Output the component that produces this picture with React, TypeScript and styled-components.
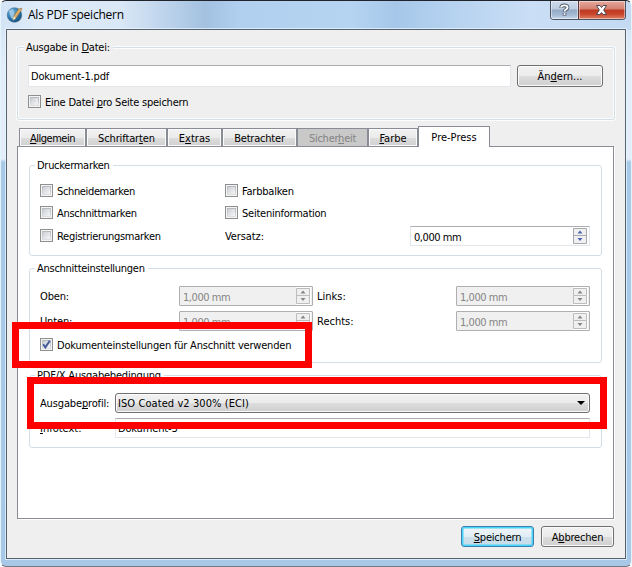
import React from "react";
import styled, { createGlobalStyle, css } from "styled-components";

const ui = `"DejaVu Sans Condensed", "DejaVu Sans", sans-serif`;

const Global = createGlobalStyle`
  * { box-sizing: border-box; }
  body { margin: 0; background: #fff; overflow: hidden; }
  #root { width: 632px; height: 567px; }
`;

const Window = styled.div`
  position: relative;
  width: 632px;
  height: 567px;
  display: flex;
  flex-direction: column;
  padding: 0 5px 7px 5px;
  border: 1px solid #e4f4fc;
  border-top-color: #22242c;
  border-bottom-color: #75797f;
  border-radius: 6px;
  color: #000;
  font-family: ${ui};
  font-size: 11px;
  line-height: 14px;
  white-space: nowrap;
  background:
    linear-gradient(90deg, #d3e4f6 0, #dfebf8 40px, #d9e7f6 120px, #bdd3ec 165px, #a3c1e0 205px, #b1d0ef 240px, #b5d4f2 350px, #a6c7e9 395px, #b0cfee 430px, #cadef5 530px, #c3daf2 100%) 0 0 / 100% 29px no-repeat,
    linear-gradient(#cfe1f5 0, #e1edf9 60px, #e3eefa 158px, #a9c9e9 161px, #a8c8e8 100%);
`;

const TitleBar = styled.header`
  display: flex;
  height: 28px;
  align-items: flex-start;
`;

const Title = styled.h1`
  flex: 1;
  margin: 5px 0 0 5px;
  font: 400 12px/18px "Open Sans", "Noto Sans", sans-serif;
  letter-spacing: -0.22px;
`;

const Logo = styled.svg`
  margin: 5px 0 0 0;
`;

const Caption = styled.div`
  display: flex;
  width: 76px;
  height: 19px;
  border: 1px solid #4c5463;
  border-top: 0;
  border-radius: 0 0 4px 4px;
  overflow: hidden;
`;

const CaptionButton = styled.button<{ $close?: boolean }>`
  display: grid;
  place-items: center;
  width: 27px;
  padding: 0;
  border: 0;
  box-shadow: inset 0 0 0 1px rgba(255, 255, 255, .45);
  background: linear-gradient(#cfdcec 0, #bccbdf 8px, #94a9c4 9px, #a5bad3 14px, #c8dbef 18px);
  ${(p) =>
    p.$close &&
    css`
      width: 48px;
      border-left: 1px solid #5d3235;
      background: linear-gradient(#e6aa9d 0, #d4806f 8px, #bb3a22 9px, #c8452b 13px, #df8064 18px);
    `}
`;

const Client = styled.main`
  display: flex;
  flex-direction: column;
  height: 530px;
  padding: 17px 10px 0 10px;
  border: 1px solid #56636f;
  background: #efefef;
  box-shadow: 0 0 0 1px rgba(235, 246, 255, .7);
`;

const Group = styled.section<{ $h: number; $mb?: number }>`
  display: flex;
  flex-direction: column;
  height: ${(p) => p.$h}px;
  margin-bottom: ${(p) => p.$mb ?? 0}px;
  padding: 0 10px;
  border: 1px solid #d3dfe6;
  border-radius: 3px;
  box-shadow: inset 0 0 0 1px rgba(255, 255, 255, .8), 0 0 0 1px rgba(255, 255, 255, .8);
`;

const Legend = styled.h2<{ $bg: string; $ls?: number; $x?: number }>`
  align-self: flex-start;
  height: 14px;
  margin: -7px 0 -1px ${(p) => p.$x ?? -5}px;
  padding: 0 3px 0 2px;
  background: ${(p) => p.$bg};
  font: inherit;
  letter-spacing: ${(p) => p.$ls ?? -0.25}px;
`;

const Label = styled.span<{ $ls?: number; $w?: number }>`
  padding-top: 2px;
  letter-spacing: ${(p) => p.$ls ?? 0}px;
  ${(p) => p.$w && css`width: ${p.$w}px; flex: none;`}
`;

const Row = styled.div<{ $h: number; $mt?: number }>`
  display: flex;
  align-items: center;
  height: ${(p) => p.$h}px;
  margin-top: ${(p) => p.$mt ?? 0}px;
`;

const Field = styled.div<{ $w: number }>`
  display: flex;
  align-items: center;
  width: ${(p) => p.$w}px;
  height: 100%;
  padding-left: 2px;
  border: 1px solid #e3e7eb;
  border-top-color: #abadb3;
  border-radius: 1px;
  background: #fff;
`;

const Button = styled.button<{ $w: number; $h?: number; $primary?: boolean; $ls?: number }>`
  width: ${(p) => p.$w}px;
  height: ${(p) => p.$h ?? 21}px;
  padding: 2px 0 0;
  border: 1px solid ${(p) => (p.$primary ? "#3c7fb1" : "#707070")};
  border-radius: 3px;
  box-shadow: ${(p) => (p.$primary ? "inset 0 0 0 1.5px #48d3f8" : "inset 0 0 0 1px #fbfbfb")};
  background: ${(p) =>
    p.$primary
      ? "linear-gradient(#eef5f9 0, #e2eef5 50%, #cde1ec 51%, #c5dce8 100%)"
      : "linear-gradient(#f2f2f2 0, #ebebeb 50%, #dddddd 51%, #cfcfcf 100%)"};
  color: #000;
  font: inherit;
  letter-spacing: ${(p) => p.$ls ?? -0.2}px;
`;

const Combo = styled.div`
  display: flex;
  align-items: center;
  justify-content: space-between;
  width: 475px;
  height: 100%;
  padding: 0 4px 0 2px;
  border: 1px solid #707070;
  border-radius: 3px;
  box-shadow: inset 0 0 0 1px #fbfbfb;
  background: linear-gradient(#f2f2f2 0, #ebebeb 50%, #dddddd 51%, #cfcfcf 100%);
`;

const CheckItem = styled.label<{ $w?: number }>`
  display: flex;
  align-items: center;
  gap: 4px;
  ${(p) => p.$w && css`width: ${p.$w}px;`}
`;

const CheckBox = styled.span`
  display: grid;
  place-items: center;
  width: 13px;
  height: 13px;
  margin-bottom: 1px;
  padding: 2px;
  border: 1px solid #8e8f8f;
  background: linear-gradient(135deg, #cbcfd5, #f6f6f6) content-box, linear-gradient(#aeb3b9, #e4e6e8) padding-box;
  box-shadow: inset 0 0 0 1px #f4f4f4;
`;

const Tick = styled.svg`
  margin: -1px;
`;

const Tabs = styled.nav`
  display: flex;
  align-items: flex-end;
  height: 21px;
  margin: 0 0 -1px 2px;
  z-index: 1;
`;

const Tab = styled.button<{ $w: number; $active?: boolean; $disabled?: boolean; $ls?: number }>`
  width: ${(p) => p.$w}px;
  height: ${(p) => (p.$active ? 21 : 19)}px;
  padding: 2px 0 0;
  border: 1px solid #898c95;
  border-bottom: ${(p) => (p.$active ? "0" : "1px solid #898c95")};
  background: ${(p) =>
    p.$active ? "#fff" : p.$disabled ? "#c9c9c9" : "linear-gradient(#f2f2f2 0, #ebebeb 50%, #dddddd 51%, #d0d0d0 100%)"};
  box-shadow: ${(p) => (p.$active || p.$disabled ? "none" : "inset 0 0 0 1px #fafafa")};
  color: ${(p) => (p.$disabled ? "#838383" : "#000")};
  font: inherit;
  letter-spacing: ${(p) => p.$ls ?? 0}px;
`;

const Pane = styled.div`
  width: 597px;
  height: 373px;
  padding: 18px 11px 0;
  border: 1px solid #898c95;
  background: #fff;
  box-shadow: 1px 1px 0 #fff;
`;

const SpinBox = styled.div<{ $w: number; $off?: boolean }>`
  display: flex;
  align-items: center;
  justify-content: space-between;
  width: ${(p) => p.$w}px;
  height: 20px;
  padding: 0 1px 0 3px;
  border: 1px solid ${(p) => (p.$off ? "#afafaf" : "#e3e7eb")};
  border-top-color: ${(p) => (p.$off ? "#afafaf" : "#abadb3")};
  border-radius: 1px;
  background: ${(p) => (p.$off ? "#f0f0f0" : "#fff")};
  color: ${(p) => (p.$off ? "#858585" : "#000")};
`;

const SpinValue = styled.span`
  padding-top: 3px;
  letter-spacing: -0.45px;
`;

const Footer = styled.footer`
  display: flex;
  justify-content: flex-end;
  gap: 7px;
  margin: 7px 1px 0 0;
`;

const Highlight = styled.div<{ $x: number; $y: number; $w: number; $h: number }>`
  position: absolute;
  left: ${(p) => p.$x}px;
  top: ${(p) => p.$y}px;
  width: ${(p) => p.$w}px;
  height: ${(p) => p.$h}px;
  border: 7px solid #f00;
  z-index: 3;
`;

const U = styled.u`
  text-decoration-thickness: 1px;
  text-underline-offset: 1px;
  text-decoration-skip-ink: none;
`;

function Check({ children, checked, w, ls }: { children: React.ReactNode; checked?: boolean; w?: number; ls?: number }) {
  return (
    <CheckItem $w={w}>
      <CheckBox>
        {checked && (
          <Tick width="9" height="9" viewBox="0 0 9 9">
            <path d="M1.2 4.2 3.4 7.4 7.8.8" fill="none" stroke="#42599c" strokeWidth="1.9" />
          </Tick>
        )}
      </CheckBox>
      <Label $ls={ls ?? -0.22}>{children}</Label>
    </CheckItem>
  );
}

function Spin({ w, off, value }: { w: number; off?: boolean; value: string }) {
  const line = off ? "#bdbdbd" : "#a5a8ae";
  const tri = off ? "#858585" : "#4a62b0";
  return (
    <SpinBox $w={w} $off={off}>
      <SpinValue>{value}</SpinValue>
      <svg width="15" height="18" viewBox="0 0 15 18">
        <path d="M0 0h15v18H0z" fill="#fff" />
        <path d="M.5 1.5h13v7H.5zM.5 8.500h13v8H.5z" fill="#f0f0f0" stroke={line} />
        <path d="M4.500 6.500h5L7 3.500zM4.500 11h5L7 14z" fill={tri} />
      </svg>
    </SpinBox>
  );
}

export default function App() {
  return (
    <>
      <Global />
      <Window>
        <TitleBar>
          <Logo width="17" height="17" viewBox="0 0 17 17">
            <defs>
              <radialGradient id="orb" cx=".35" cy=".3" r=".8">
                <stop offset="0" stopColor="#7db8dd" />
                <stop offset=".55" stopColor="#2877b0" />
                <stop offset="1" stopColor="#12466f" />
              </radialGradient>
            </defs>
            <circle cx="8.500" cy="9" r="7.300" fill="url(#orb)" stroke="#4d7390" strokeWidth=".6" />
            <path d="M2.500 4.500 7 3l2 8-1 3.500-3-3z" fill="#a9d2ec" opacity=".75" />
            <path d="M15.800 2.200 12.500 3 7.600 10.500 7 14.200l3-2.300 5-7.200z" fill="#dcb06a" stroke="#8e6a34" strokeWidth=".6" />
            <path d="m7.600 10.500 2.400 1.400-3 2.300z" fill="#f3e8cf" />
          </Logo>
          <Title>Als PDF speichern</Title>
          <Caption>
            <CaptionButton aria-label="Hilfe">
              <svg width="11" height="14" viewBox="0 0 11 14">
                <path d="M2.200 4.800C2.200 1.600 8.600 1.600 8.600 4.500c0 2.200-3.100 1.900-3.100 4.300M5.500 10v2.500" fill="none" stroke="#4a5468" strokeWidth="3.600" />
                <path d="M2.200 4.500C2.200 1.700 8.600 1.700 8.600 4.500c0 2.200-3.100 1.900-3.100 4M5.500 10.200v1.700" fill="none" stroke="#fff" strokeWidth="1.900" />
              </svg>
            </CaptionButton>
            <CaptionButton $close aria-label="Schließen">
              <svg width="13" height="12" viewBox="0 0 13 12">
                <path d="M1.500 1.500h3.400l1.600 2 1.600-2h3.400L8.700 6l2.800 4.500H8.100l-1.600-2-1.600 2H1.500L4.300 6z" fill="#fff" stroke="#4a4553" strokeWidth="1" />
              </svg>
            </CaptionButton>
          </Caption>
        </TitleBar>
        <Client>
          <Group $h={73} $mb={6}>
            <Legend $bg="#efefef" $x={-4}>Ausgabe in <U>D</U>atei:</Legend>
            <Row $h={22} $mt={11}>
              <Field $w={483}><Label $ls={-0.15}>Dokument-1.pdf</Label></Field>
              <Label $w={6} />
              <Button $w={86} $h={22} $ls={0}>Än<U>d</U>ern...</Button>
            </Row>
            <Row $h={14} $mt={8}>
              <Check>Eine Datei <U>p</U>ro Seite speichern</Check>
            </Row>
          </Group>
          <Tabs>
            <Tab $w={67} $ls={-0.5}><U>A</U>llgemein</Tab>
            <Tab $w={81} $ls={-0.12}>Schriftar<U>t</U>en</Tab>
            <Tab $w={55}>E<U>x</U>tras</Tab>
            <Tab $w={75} $ls={-0.2}>Betrachter</Tab>
            <Tab $w={71} $ls={-0.25} $disabled>Sicher<U>h</U>eit</Tab>
            <Tab $w={50}><U>F</U>arbe</Tab>
            <Tab $w={72} $active>Pre-Press</Tab>
          </Tabs>
          <Pane>
            <Group $h={91} $mb={12}>
              <Legend $bg="#fff" $ls={-0.28}>Druckermarken</Legend>
              <Row $h={14} $mt={12}>
                <Check w={185} ls={-0.36}>Schneidemarken</Check>
                <Check>Farbbalken</Check>
              </Row>
              <Row $h={14} $mt={8}>
                <Check w={185} ls={-0.3}>Anschnittmarken</Check>
                <Check ls={-0.24}>Seiteninformation</Check>
              </Row>
              <Row $h={20} $mt={6}>
                <Check w={185} ls={-0.26}>Registrierungsmarken</Check>
                <Label $w={185} $ls={-0.1}>Versatz:</Label>
                <Spin w={180} value="0,000 mm" />
              </Row>
            </Group>
            <Group $h={95} $mb={12}>
              <Legend $bg="#fff" $ls={-0.27}>Anschnitteinstellungen</Legend>
              {[["Oben:", "Links:"], ["Unten:", "Rechts:"]].map(([a, b], i) => (
                <Row key={a} $h={20} $mt={i ? 5 : 11}>
                  <Label $w={139} $ls={-0.15}>{a}</Label>
                  <Spin w={134} off value="1,000 mm" />
                  <Label $w={4} />
                  <Label $w={139}>{b}</Label>
                  <Spin w={134} off value="1,000 mm" />
                </Row>
              ))}
              <Row $h={14} $mt={7}>
                <Check checked ls={-0.2}>Dokumenteinstellungen für Anschnitt verwenden</Check>
              </Row>
            </Group>
            <Group $h={73}>
              <Legend $bg="#fff" $ls={-0.2}>PDF/X Ausgabebedingung</Legend>
              <Row $h={20} $mt={11}>
                <Label $w={75} $ls={-0.15}>Ausgabe<U>p</U>rofil:</Label>
                <Combo>
                  <Label $ls={0.08}>ISO Coated v2 300% (ECI)</Label>
                  <svg width="8" height="4" viewBox="0 0 8 4"><path d="M0 0h8L4 4z" /></svg>
                </Combo>
              </Row>
              <Row $h={20} $mt={5}>
                <Label $w={75}><U>I</U>nfotext:</Label>
                <Field $w={475}><Label $ls={-0.15}>Dokument-3</Label></Field>
              </Row>
            </Group>
          </Pane>
          <Footer>
            <Button $w={73} $primary><U>S</U>peichern</Button>
            <Button $w={73}>A<U>b</U>brechen</Button>
          </Footer>
        </Client>
        <Highlight $x={11} $y={321} $w={300} $h={46} />
        <Highlight $x={26} $y={376} $w={580} $h={52} />
      </Window>
    </>
  );
}
